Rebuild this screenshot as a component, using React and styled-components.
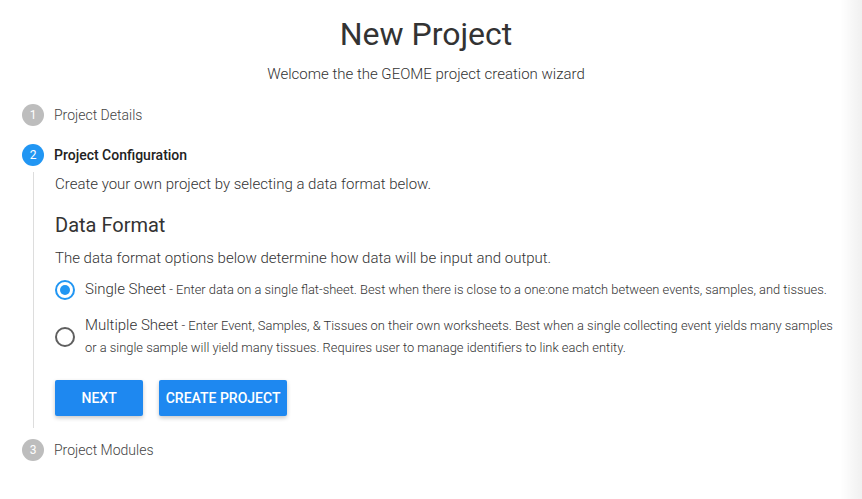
import React from 'react';
import styled, { createGlobalStyle } from 'styled-components';

const GlobalStyle = createGlobalStyle`
  html, body {
    margin: 0;
    padding: 0;
    background: #fff;
    font-family: Roboto, "Liberation Sans", sans-serif;
    color: #333;
  }
`;

const Page = styled.div`
  position: relative;
  width: 862px;
  height: 499px;
  overflow: hidden;
  background: #fff;
`;

const EdgeShade = styled.div`
  position: absolute;
  top: 0;
  right: 0;
  width: 22px;
  height: 100%;
  background: linear-gradient(to right, rgba(0, 0, 0, 0), rgba(0, 0, 0, 0.06));
`;

const Header = styled.header`
  display: flex;
  flex-direction: column;
  align-items: center;
  padding: 14px 10px 0 0;
`;

const Title = styled.h1`
  margin: 0;
  font-size: 32px;
  font-weight: 400;
  line-height: 40px;
  color: #333;
`;

const Subtitle = styled.p`
  margin: 10px 0 0;
  font-size: 15px;
  font-weight: 300;
  line-height: 20px;
  color: #333;
`;

const Stepper = styled.div`
  display: flex;
  flex-direction: column;
  padding: 19px 0 0 22px;
`;

const Step = styled.div`
  display: flex;
  flex-direction: column;
`;

const StepHead = styled.div`
  display: flex;
  align-items: center;
  height: 24px;
  gap: 10px;
  margin-bottom: ${(p) => (p.$active ? '5px' : '16px')};
`;

const StepNum = styled.div`
  width: 22px;
  height: 22px;
  border-radius: 50%;
  background: ${(p) => (p.$active ? '#2196f3' : '#bdbdbd')};
  color: #fff;
  font-size: 12px;
  display: flex;
  align-items: center;
  justify-content: center;
`;

const StepLabel = styled.span`
  font-size: 14px;
  font-weight: ${(p) => (p.$active ? 500 : 300)};
  color: ${(p) => (p.$active ? '#222' : '#444')};
`;

const StepBody = styled.div`
  margin-left: 11px;
  border-left: 1px solid #ddd;
  padding: 0 0 12px 21px;
  margin-bottom: 10px;
`;

const Intro = styled.p`
  margin: 0;
  font-size: 15px;
  font-weight: 300;
  line-height: 24px;
  color: #333;
`;

const SectionTitle = styled.h3`
  margin: 15px 0 0;
  font-size: 20px;
  font-weight: 400;
  line-height: 28px;
  color: #333;
`;

const SectionText = styled.p`
  margin: 8px 0 0;
  font-size: 15px;
  font-weight: 300;
  line-height: 22px;
  color: #333;
`;

const Options = styled.div`
  display: flex;
  flex-direction: column;
  gap: 13px;
  margin-top: 9px;
`;

const Option = styled.label`
  display: flex;
  align-items: center;
  gap: 10px;
`;

const Radio = styled.span`
  flex: none;
  width: 20px;
  height: 20px;
  box-sizing: border-box;
  border-radius: 50%;
  border: 2px solid ${(p) => (p.$checked ? '#2196f3' : '#5f5f5f')};
  display: flex;
  align-items: center;
  justify-content: center;
  &::after {
    content: '';
    width: 10px;
    height: 10px;
    border-radius: 50%;
    background: ${(p) => (p.$checked ? '#2196f3' : 'transparent')};
  }
`;

const OptionText = styled.div`
  max-width: 755px;
  font-size: 12.9px;
  font-weight: 300;
  line-height: 22px;
  color: #333;
`;

const OptionName = styled.span`
  font-size: 15px;
`;

const Actions = styled.div`
  display: flex;
  gap: 16px;
  margin-top: 21px;
`;

const Button = styled.button`
  height: 36px;
  padding: 0 ${(p) => p.$pad || '6.5px'};
  border: none;
  border-radius: 2px;
  background: #1e88f0;
  color: #fff;
  font-family: Roboto, "Liberation Sans", sans-serif;
  font-size: 14px;
  font-weight: 500;
  text-transform: uppercase;
  box-shadow: 0 2px 4px rgba(0, 0, 0, 0.22);
  cursor: pointer;
`;

const steps = ['Project Details', 'Project Configuration', 'Project Modules'];

export default function App() {
  return (
    <Page>
      <GlobalStyle />
      <Header>
        <Title>New Project</Title>
        <Subtitle>Welcome the the GEOME project creation wizard</Subtitle>
      </Header>
      <Stepper>
        {steps.map((label, i) => {
          const active = i === 1;
          return (
            <Step key={label}>
              <StepHead $active={active}>
                <StepNum $active={active}>{i + 1}</StepNum>
                <StepLabel $active={active}>{label}</StepLabel>
              </StepHead>
              {active && (
                <StepBody>
                  <Intro>Create your own project by selecting a data format below.</Intro>
                  <SectionTitle>Data Format</SectionTitle>
                  <SectionText>
                    The data format options below determine how data will be input and output.
                  </SectionText>
                  <Options>
                    <Option>
                      <Radio $checked />
                      <OptionText>
                        <OptionName>Single Sheet</OptionName> - Enter data on a single flat-sheet. Best when there is close to a one:one match between events, samples, and tissues.
                      </OptionText>
                    </Option>
                    <Option>
                      <Radio />
                      <OptionText>
                        <OptionName>Multiple Sheet</OptionName> - Enter Event, Samples, &amp; Tissues on their own worksheets. Best when a single collecting event yields many samples or a single sample will yield many tissues. Requires user to manage identifiers to link each entity.
                      </OptionText>
                    </Option>
                  </Options>
                  <Actions>
                    <Button $pad="26.5px">Next</Button>
                    <Button>Create Project</Button>
                  </Actions>
                </StepBody>
              )}
            </Step>
          );
        })}
      </Stepper>
      <EdgeShade />
    </Page>
  );
}
